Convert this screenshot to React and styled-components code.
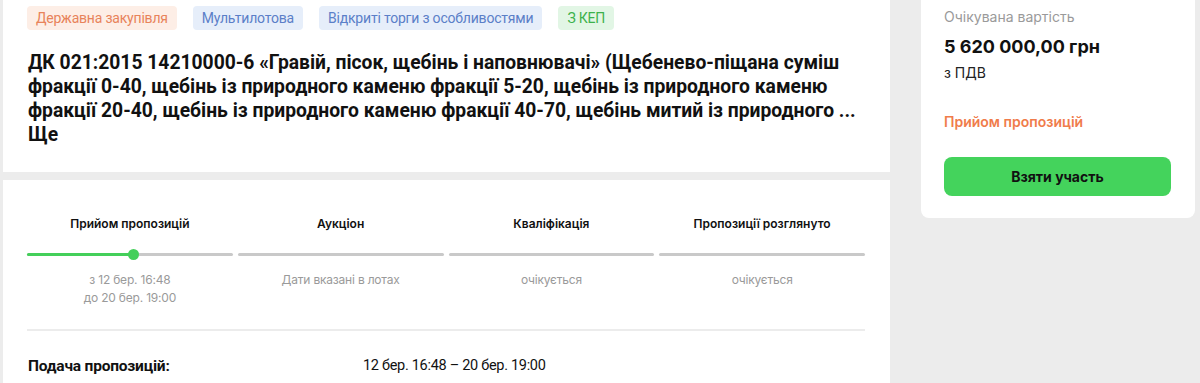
import React from "react";
import styled, { createGlobalStyle } from "styled-components";

const Global = createGlobalStyle`
  html, body { margin: 0; padding: 0; background: #ececec; }
  body { font-family: Inter, "Noto Sans", sans-serif; color: #111; overflow: hidden; }
  * { box-sizing: border-box; }
`;

const Page = styled.div`
  display: grid;
  grid-template-columns: 887px 274px;
  column-gap: 31px;
  padding: 0 5px 0 3px;
  margin-top: -18px;
  align-items: start;
`;

const Column = styled.div`
  display: flex;
  flex-direction: column;
  gap: 8px;
`;

const Card = styled.section`
  background: #fff;
  padding: ${(p) => p.$pad || "24px"};
`;

const Tags = styled.div`
  display: flex;
  gap: 16px;
`;

const tagColors = {
  orange: ["#fdeee6", "#e8835a"],
  blue: ["#e6eefa", "#5b7fc8"],
  green: ["#e2f6e5", "#3db24c"],
};

const Tag = styled.span`
  display: inline-flex;
  align-items: center;
  height: 24px;
  padding: 0 9px;
  border-radius: 4px;
  font-family: Roboto, sans-serif;
  font-size: 14px;
  letter-spacing: -0.2px;
  background: ${(p) => tagColors[p.$tone][0]};
  color: ${(p) => tagColors[p.$tone][1]};
`;

const Title = styled.h1`
  margin: 21px 0 0 0;
  padding-left: 1px;
  font-family: Roboto, sans-serif;
  font-weight: 700;
  font-size: 19.3px;
  line-height: 24px;
  letter-spacing: 0;
  color: #111;
`;

const Line = styled.span`
  display: block;
  white-space: nowrap;
`;

const Steps = styled.div`
  display: grid;
  grid-template-columns: repeat(4, 1fr);
  column-gap: 5px;
  padding-top: 12px;
`;

const Step = styled.div`
  display: flex;
  flex-direction: column;
  align-items: center;
  text-align: center;
`;

const StepTitle = styled.div`
  font-family: Inter, sans-serif;
  font-weight: 600;
  font-size: 12px;
  line-height: 16px;
  color: #111;
  height: 16px;
`;

const Bar = styled.div`
  position: relative;
  align-self: stretch;
  height: 3px;
  margin-top: 21px;
  background: #c9c9c9;
  border-radius: 2px;
`;

const Fill = styled.div`
  position: absolute;
  left: 0;
  top: 0;
  bottom: 0;
  background: #44cf5a;
  border-radius: 2px;
`;

const Dot = styled.span`
  position: absolute;
  top: 50%;
  right: -5px;
  width: 11px;
  height: 11px;
  margin-top: -5.5px;
  border-radius: 50%;
  background: #44cf5a;
`;

const StepNote = styled.div`
  margin-top: 15px;
  font-family: Inter, sans-serif;
  font-size: 12px;
  letter-spacing: -0.2px;
  line-height: 18px;
  color: #9a9a9a;
`;

const Divider = styled.hr`
  border: 0;
  height: 2px;
  background: #ececec;
  margin: ${(p) => p.$gap || 22}px 0 0 0;
`;

const InfoRow = styled.div`
  display: grid;
  grid-template-columns: 335px 1fr;
  padding-top: 25px;
  font-family: Roboto, sans-serif;
  font-size: 14.5px;
  line-height: 20px;
  letter-spacing: -0.3px;
  padding-left: 1px;
`;

const InfoLabel = styled.span`
  font-weight: 700;
  font-size: 15.5px;
  letter-spacing: -0.2px;
`;

const Side = styled.aside`
  background: #fff;
  border-radius: 8px;
  padding: 25px 24px 22px 23px;
  display: flex;
  flex-direction: column;
`;

const Muted = styled.div`
  font-size: 14px;
  line-height: 20px;
  color: #9a9a9a;
`;

const Price = styled.div`
  margin-top: 9px;
  font-size: 18px;
  line-height: 22px;
  font-weight: 700;
  color: #111;
`;

const Vat = styled.div`
  margin-top: 6px;
  font-size: 14px;
  line-height: 18px;
  color: #222;
`;

const Status = styled.div`
  margin-top: 30px;
  font-size: 14px;
  line-height: 20px;
  font-weight: 600;
  color: #f07c4b;
`;

const Button = styled.button`
  margin-top: 25px;
  height: 39px;
  border: 0;
  border-radius: 8px;
  background: #44d35c;
  color: #111;
  font-family: Inter, sans-serif;
  font-weight: 700;
  font-size: 14px;
  cursor: pointer;
`;

const steps = [
  { title: "Прийом пропозицій", note: ["з 12 бер. 16:48", "до 20 бер. 19:00"], progress: 52 },
  { title: "Аукціон", note: ["Дати вказані в лотах"] },
  { title: "Кваліфікація", note: ["очікується"] },
  { title: "Пропозиції розглянуто", note: ["очікується"] },
];

const titleLines = [
  "ДК 021:2015 14210000-6 «Гравій, пісок, щебінь і наповнювачі» (Щебенево-піщана суміш",
  "фракції 0-40, щебінь із природного каменю фракції 5-20, щебінь із природного каменю",
  "фракції 20-40, щебінь із природного каменю фракції 40-70, щебінь митий із природного ...",
  "Ще",
];

export default function App() {
  return (
    <>
      <Global />
      <Page>
        <Column>
          <Card $pad="24px 24px 25px 24px">
            <Tags>
              <Tag $tone="orange">Державна закупівля</Tag>
              <Tag $tone="blue">Мультилотова</Tag>
              <Tag $tone="blue">Відкриті торги з особливостями</Tag>
              <Tag $tone="green">З КЕП</Tag>
            </Tags>
            <Title>
              {titleLines.map((l) => (
                <Line key={l}>{l}</Line>
              ))}
            </Title>
          </Card>
          <Card $pad="24px 25px 24px 24px">
            <Steps>
              {steps.map((s) => (
                <Step key={s.title}>
                  <StepTitle>{s.title}</StepTitle>
                  <Bar>
                    {s.progress ? (
                      <Fill style={{ width: `${s.progress}%` }}>
                        <Dot />
                      </Fill>
                    ) : null}
                  </Bar>
                  <StepNote>
                    {s.note.map((n) => (
                      <div key={n}>{n}</div>
                    ))}
                  </StepNote>
                </Step>
              ))}
            </Steps>
            <Divider $gap={22} />
            <InfoRow>
              <InfoLabel>Подача пропозицій:</InfoLabel>
              <span>12 бер. 16:48 – 20 бер. 19:00</span>
            </InfoRow>
          </Card>
        </Column>
        <Side>
          <Muted>Очікувана вартість</Muted>
          <Price>5 620 000,00 грн</Price>
          <Vat>з ПДВ</Vat>
          <Status>Прийом пропозицій</Status>
          <Button>Взяти участь</Button>
        </Side>
      </Page>
    </>
  );
}
